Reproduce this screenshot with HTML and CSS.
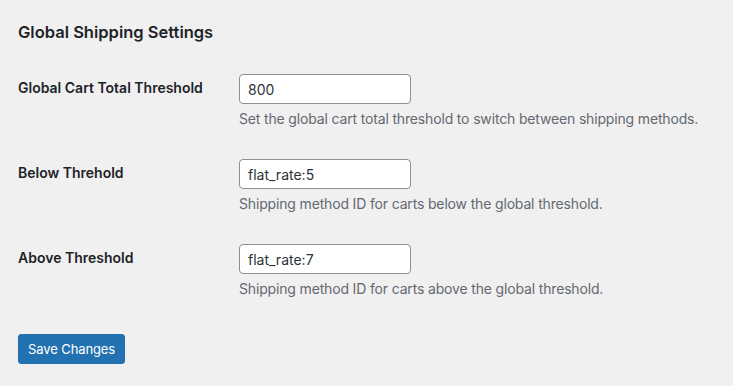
FILE: index.html
```html
<!DOCTYPE html>
<html lang="en">
<head>
  <meta charset="UTF-8" />
  <title>Global Shipping Settings</title>
  <link rel="stylesheet" href="styles.css">
</head>
<body>
  <div class="wrap">
    <h2>Global Shipping Settings</h2>
    <form>
      <table class="form-table">
        <tr>
          <th><label for="threshold">Global Cart Total Threshold</label></th>
          <td>
            <input type="text" id="threshold" value="800" />
            <p class="description">Set the global cart total threshold to switch between shipping methods.</p>
          </td>
        </tr>
        <tr>
          <th><label for="below">Below Threhold</label></th>
          <td>
            <input type="text" id="below" value="flat_rate:5" />
            <p class="description">Shipping method ID for carts below the global threshold.</p>
          </td>
        </tr>
        <tr>
          <th><label for="above">Above Threshold</label></th>
          <td>
            <input type="text" id="above" value="flat_rate:7" />
            <p class="description">Shipping method ID for carts above the global threshold.</p>
          </td>
        </tr>
      </table>
      <p class="submit"><button type="button" class="button-primary">Save Changes</button></p>
    </form>
  </div>
</body>
</html>
```

FILE: styles.css
```css
* {
  box-sizing: border-box;
}
body {
  margin: 0;
  background: #f0f0f1;
  color: #1d2327;
  font-family: Inter, "Noto Sans", sans-serif;
  font-size: 13px;
}
.wrap {
  padding: 21px 18px 0;
}
h2 {
  margin: 0 0 16px;
  font-size: 16.5px;
  line-height: 22px;
  font-weight: 600;
}
.form-table {
  border-collapse: collapse;
  width: 100%;
}
.form-table th {
  width: 221px;
  padding: 20px 10px 20px 0;
  text-align: left;
  vertical-align: top;
  font-size: 14px;
  line-height: 1.3;
  font-weight: 600;
}
.form-table td {
  padding: 15px 10px 15px 0;
  vertical-align: top;
}
.form-table input {
  display: block;
  width: 172px;
  height: 30px;
  margin: 0;
  padding: 0 8px;
  border: 1px solid #8c8f94;
  border-radius: 4px;
  background: #fff;
  color: #2c3338;
  font-family: inherit;
  font-size: 14px;
}
.description {
  margin: 4px 0 0;
  font-size: 14px;
  line-height: 21px;
  letter-spacing: -0.16px;
  white-space: nowrap;
  color: #646970;
}
.submit {
  margin: 20px 0 0;
}
.button-primary {
  height: 30px;
  padding: 0 9px;
  border: 1px solid #2271b1;
  border-radius: 3px;
  background: #2271b1;
  color: #fff;
  font-family: inherit;
  font-size: 13px;
  letter-spacing: -0.1px;
  cursor: pointer;
}
```
